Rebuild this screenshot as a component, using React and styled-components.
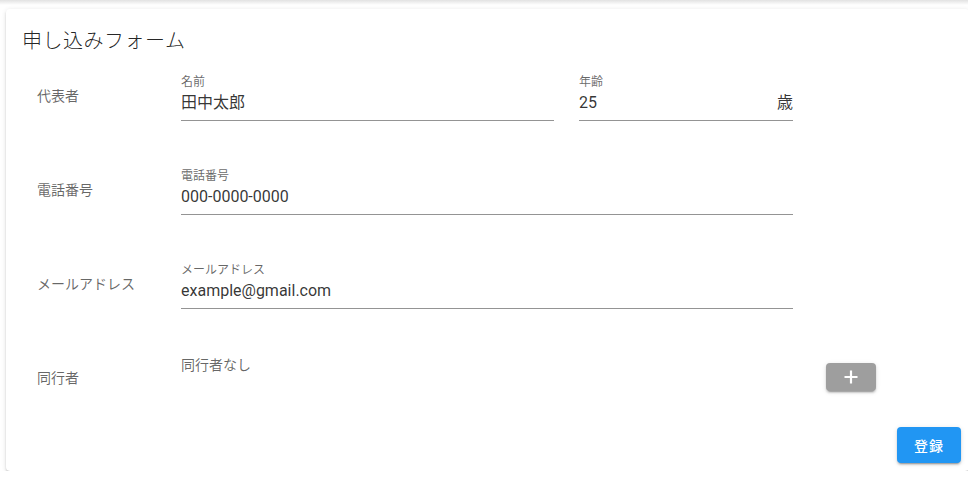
import React from 'react';
import styled, {createGlobalStyle} from "styled-components";

const GlobalStyle = createGlobalStyle`
  html, body {
    margin: 0;
    padding: 0;
    background: #fff;
    overflow: hidden;
  }
  body {
    font-family: Roboto, "Noto Sans CJK JP", sans-serif;
    -webkit-font-smoothing: antialiased;
  }
`;

// 上のバーの影だけが見えている
const TopShadow = styled.div`
  height: 5px;
  background: linear-gradient(to bottom, #e2e2e2, #f3f3f3 60%, #fff);
`;

const Card = styled.div`
  margin: 4px -1px 0 6px;
  background: #fff;
  border-radius: 4px;
  box-shadow: 0 3px 1px -2px rgba(0, 0, 0, .2), 0 2px 2px 0 rgba(0, 0, 0, .14), 0 1px 5px 0 rgba(0, 0, 0, .12);
  height: 462px;
  display: flex;
  flex-direction: column;
`;

const Title = styled.div`
  padding: 16px 16px 0;
  font-size: 20px;
  font-weight: 300;
  line-height: 32px;
  color: rgba(0, 0, 0, .87);
  letter-spacing: .5px;
`;

const Body = styled.div`
  padding-top: 7px;
  flex: 1;
`;

const Row = styled.div`
  display: flex;
  height: ${props => props.h || 94}px;
  padding-left: 31px;
`;

const RowLabel = styled.div`
  width: 144px;
  flex-shrink: 0;
  padding-top: 22px;
  font-size: 14px;
  line-height: 20px;
  color: rgba(0, 0, 0, .6);
`;

const Fields = styled.div`
  display: flex;
  gap: 25px;
  width: 612px;
  padding-top: 11px;
`;

const Field = styled.div`
  width: ${props => props.w}px;
  border-bottom: 1px solid rgba(0, 0, 0, .42);
  height: 45px;
`;

const FieldLabel = styled.div`
  font-size: 12px;
  line-height: 14px;
  color: rgba(0, 0, 0, .6);
`;

const Value = styled.div`
  display: flex;
  justify-content: space-between;
  padding-top: 4px;
  font-size: 16px;
  line-height: 20px;
  color: rgba(0, 0, 0, .8);
`;

const Empty = styled.div`
  width: 612px;
  padding-top: 9px;
  font-size: 14px;
  line-height: 20px;
  color: rgba(0, 0, 0, .6);
`;

const AddButton = styled.button`
  margin: 17px 0 0 33px;
  width: 50px;
  height: 28px;
  border: none;
  border-radius: 4px;
  background: #9e9e9e;
  color: #fff;
  display: flex;
  align-items: center;
  justify-content: center;
  padding: 0;
  box-shadow: 0 3px 1px -2px rgba(0, 0, 0, .2), 0 2px 2px 0 rgba(0, 0, 0, .14), 0 1px 5px 0 rgba(0, 0, 0, .12);
`;

const Actions = styled.div`
  display: flex;
  justify-content: flex-end;
  padding: 0 8px 8px 0;
`;

const SubmitButton = styled.button`
  width: 64px;
  height: 36px;
  border: none;
  border-radius: 4px;
  background: #2196f3;
  color: #fff;
  font-family: Roboto, "Noto Sans CJK JP", sans-serif;
  font-size: 14px;
  font-weight: 500;
  letter-spacing: 1px;
  box-shadow: 0 3px 1px -2px rgba(0, 0, 0, .2), 0 2px 2px 0 rgba(0, 0, 0, .14), 0 1px 5px 0 rgba(0, 0, 0, .12);
`;

const Plus = () => (
    <svg width="16" height="16" viewBox="0 0 16 16">
        <path d="M8 1.5v13M1.5 8h13" stroke="#fff" strokeWidth="2.2" fill="none"/>
    </svg>
);

const TextField = ({label, value, suffix, w}) => (
    <Field w={w}>
        <FieldLabel>{label}</FieldLabel>
        <Value>
            <span>{value}</span>
            {suffix && <span>{suffix}</span>}
        </Value>
    </Field>
);

export default function App() {
    return (
        <>
            <GlobalStyle/>
            <TopShadow/>
            <Card>
                <Title>申し込みフォーム</Title>
                <Body>
                    <Row>
                        <RowLabel>代表者</RowLabel>
                        <Fields>
                            <TextField label="名前" value="田中太郎" w={373}/>
                            <TextField label="年齢" value="25" suffix="歳" w={214}/>
                        </Fields>
                    </Row>
                    <Row>
                        <RowLabel>電話番号</RowLabel>
                        <Fields>
                            <TextField label="電話番号" value="000-0000-0000" w={612}/>
                        </Fields>
                    </Row>
                    <Row>
                        <RowLabel>メールアドレス</RowLabel>
                        <Fields>
                            <TextField label="メールアドレス" value="example@gmail.com" w={612}/>
                        </Fields>
                    </Row>
                    <Row h={72}>
                        <RowLabel>同行者</RowLabel>
                        <Empty>同行者なし</Empty>
                        <AddButton><Plus/></AddButton>
                    </Row>
                </Body>
                <Actions>
                    <SubmitButton>登録</SubmitButton>
                </Actions>
            </Card>
        </>
    );
}
